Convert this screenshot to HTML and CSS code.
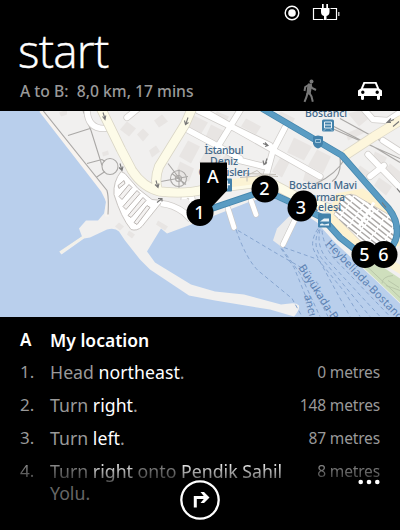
FILE: index.html
```html
<!DOCTYPE html>
<html lang="en">
<head>
<meta charset="utf-8">
<title>Directions</title>
<link rel="stylesheet" href="styles.css">
</head>
<body>
<main class="phone">
  <header class="header">
    <div class="status">
      <svg width="16" height="16" viewBox="0 0 16 16"><circle cx="8" cy="8" r="6.8" fill="none" stroke="#fff" stroke-width="1.4"/><circle cx="8" cy="8" r="3.8" fill="#fff"/></svg>
      <svg width="28" height="18" viewBox="0 0 28 18"><path d="M9 4.500H1.500v11h10M14.500 15.500h10v-11h-6" fill="none" stroke="#fff" stroke-width="1.200"/><path d="M26 8h1.500v4H26z" fill="#bbb"/><path d="M10 0h1.700v4h2.600V0H16v4h1.500v4c0 2.200-1.300 3.500-3 4v4h-2.500v-4c-1.800-.5-3-1.800-3-4V4h1z" fill="#fff"/></svg>
    </div>
    <h1>start</h1>
    <div class="summary">
      <p>A to B:&nbsp; 8,0 km, 17 mins</p>
      <div class="modes">
        <svg width="16" height="24" viewBox="0 0 16 24"><circle cx="9.500" cy="2.500" r="2" fill="#777"/><path d="M7.300 5.500L3.200 8 2.500 12M8 5.500l2 3.500 4 2M5.500 14l-1 4-2 4.800M7 13.500l2.500 4 1.300 5.300" fill="none" stroke="#777" stroke-width="2"/><path d="M6 4.500h4L9.500 10l-1 5.500h-4L5 9z" fill="#777"/></svg>
        <svg width="24" height="18" viewBox="0 0 24 18"><path fill="#fff" fill-rule="evenodd" d="M5.500 0h13l2.700 6.500L24 8.500V14h-2v2.500a1.500 1.500 0 0 1-3 0V14H6v2.500a1.500 1.500 0 0 1-3 0V14H0V8.500l2.800-2zM7 1.800L5 6.300h14l-2-4.500zM4.800 8.500a1.700 1.700 0 1 0 0 3.400 1.700 1.700 0 0 0 0-3.400zm14.400 0a1.700 1.700 0 1 0 0 3.400 1.700 1.700 0 0 0 0-3.400z"/></svg>
      </div>
    </div>
  </header>

  <svg class="map" viewBox="0 110.500 400 206" width="400" height="206">
    <defs>
      <clipPath id="lot"><path d="M342 197Q351 190 361 198L392 216Q397 228 392 247L369 249L334 214Z"/></clipPath>
    </defs>
    <rect y="110" width="400" height="207" fill="#b9cfec"/>
    <!-- land -->
    <path fill="#f1f0ef" d="M41 110L60 131 82 164 104 194 106 202 104 213 98 220H86L79 228 82 236 60 251.500 61.500 254 84 238 90 237 107 229Q115 227 119 231L125 240 140 259 150 269 189 295 215 300 270 309 294 316Q300 309 299 305 296 302 290 303L281 304 244 294 215 291 191 284 155 262 147 251 161 228 167 233 202 220 250 201 270 196 295 207 317 222 334 241 350 256 376 280 400 303V110Z"/>
    <path d="M60 252L84 236" stroke="#f3f1e9" stroke-width="2.500"/>
    <path d="M41 110L103 190 108 200 107 216" fill="none" stroke="#f7f3ef" stroke-width="4"/>
    <path d="M289 216L277 228 273 240 281 246 299 216Z" fill="#ebebeb"/>
    <path d="M358 262L367 256 400 278V302Z" fill="#cfdfbd"/>
    <path d="M368 267L400 297M382 283Q382 276 393 275M386 285L400 290M388 280L399 287" fill="none" stroke="#b9c7a9"/>
    <!-- building blocks -->
    <g fill="#e8e5e3">
      <path d="M120 129l7-8 9 7-7 8zM102 152l6-2 1 4-6 2zM59 112l8-3v5l-6 2zM137 134l6-6 6 6-6 7zM149 150l7-5 4 6-8 6zM154 120l8-6 6 7-9 6zM119 222l5 4-4 4-5-4zM129 230l6 4-3 4-5-4zM158 220l10 6-3 4-9-6z"/>
      <path d="M194 115l14 7-8 13-13-7zM211 124l18 9-9 16-16-9zM217 111l12 5-6 10-12-6zM246 118l15 8-5 8-15-8zM188 140l12 6-9 17-12-7zM207 148l14 7-8 14-14-7zM233 148l-1 17-10-7zM180 161l14 7-5 13-15-4zM294 137l18 9-8 14-17-8zM317 149l14 7-8 17-15-8zM281 156l9 5-8 16-10-6zM281 111l14 7-5 9-16-9zM306 169l18 8-4 10-17-7zM348 113l15-4 8 7-12 10zM346 133l14-6 5 5-17 8zM360 165l10 7-6 9-9-8zM379 177l13 9-6 9-12-10zM375 151l12 6-5 10-10-8zM390 163l10 8v10l-14-12z"/>
    </g>
    <!-- footpaths -->
    <g fill="none" stroke="#aaa8a6" stroke-width="1.100">
      <path d="M43 110L107 190Q109 197 108 214M68 135L90 128M83 110L91 130 102 165M87 163L102 159M96 177L105 171M102 159L105 161"/>
      <circle cx="110" cy="166" r="8"/>
      <circle cx="178.500" cy="178" r="8"/><circle cx="178.500" cy="178" r="3"/>
      <path d="M168 163L184 184M161 181L188 176M179 169V188M172 173L186 184M345 158Q336 174 316 183M340 157Q342 174 332 181M328 123L375 147 400 162M330 127L400 158M340 118L400 151"/>
    </g>
    <!-- minor streets: casing, then surface -->
    <g fill="none" stroke-linejoin="round" stroke-linecap="round">
      <path stroke="#cfccc9" stroke-width="7" d="M187 129L213 143 240 158M198 110L270 145M205 111L320 176M240 110L216 149M285 127L273 150 262 190M240 160L264 166M365 110L373 119 388 120 400 112M368 154L400 187M370 176L384 165M383 140L400 151M87 108Q87 128 104 128L111 127M127 117L138 108"/>
      <path stroke="#fff" stroke-width="5.500" d="M187 129L213 143 240 158M198 110L270 145M205 111L320 176M240 110L216 149M285 127L273 150 262 190M240 160L264 166M365 110L373 119 388 120 400 112M368 154L400 187M370 176L384 165M383 140L400 151M87 108Q87 128 104 128L111 127M127 117L138 108"/>
    </g>
    <!-- west parking lot -->
    <path d="M121 171Q113 181 114 194 121 217 131 229 137 231 142 226L163 200 152 199 138 188 125 173Z" fill="#fff" stroke="#c9c5c2"/>
    <g fill="#f4f2f1" stroke="#aaa3a0" stroke-width=".8">
      <path d="M118 185l6-5 1 3-6 5zM119 196l10-12 3 3-10 12zM123 206l14-16 3 3-14 16zM128 215l15-18 3 3-15 17zM134 222l13-17 3 2-13 17z"/>
    </g>
    <path d="M161 203Q173 204 184 212L191 219M184 199a4 4 0 1 1 6 3" fill="none" stroke="#d0cdca" stroke-width="7"/>
    <path d="M161 203Q173 204 184 212L191 219M184 199a4 4 0 1 1 6 3" fill="none" stroke="#fff" stroke-width="5.500"/>
    <!-- main roads -->
    <g fill="none" stroke-linejoin="round">
      <path d="M101 108L121 149 132 170Q143 187 160 191 185 194 204 189L268 181 300 198 330 208M192 108L185 124 159 166Q154 179 158 190" stroke="#d9d5c5" stroke-width="10"/>
      <path d="M101 108L121 149 132 170Q143 187 160 191 185 194 204 189L268 181 300 198 330 208M192 108L185 124 159 166Q154 179 158 190" stroke="#fdfbe8" stroke-width="8.500"/>
      <path d="M402 119L374 136 345 155" stroke="#ddd8c8" stroke-width="10"/>
      <path d="M402 119L374 136 345 155" stroke="#fdf6dc" stroke-width="8.500"/>
      <path d="M205 186L268 178M368 249L390 263 402 270" stroke="#fbf3d4" stroke-width="8"/>
      <path d="M245 173L276 174M240 177L264 175M247 181V175L257 170 263 175 278 176" stroke="#c5c0b8" stroke-width="1"/>
    </g>
    <path d="M336 193L363 188 395 210 400 245 365 256 327 219Z" fill="#fdf2cf"/>
    <path d="M342 197Q351 190 361 198L392 216Q397 228 392 247L369 249L334 214Z" fill="#fff" stroke="#d7cfc4"/>
    <g clip-path="url(#lot)" fill="none" stroke="#aaa7a5" stroke-width="1.400" stroke-dasharray="11 1.500">
      <path d="M349 187L405 231M344 189L404 236M342 194L400 240M339 197L398 244M337 201L396 248M334 204L390 249M332 208L382 248M329 211L373 247"/>
    </g>
    <path d="M374 202L359 226" stroke="#fff" stroke-width="3"/>
    <!-- piers -->
    <g stroke-linecap="round" fill="none">
      <path d="M228 208L234 227M251 200L256 214M296 217L283 244" stroke="#cbc8c5" stroke-width="6"/>
      <path d="M228 208L234 227M251 200L256 214M296 217L283 244" stroke="#fff" stroke-width="4.800"/>
    </g>
    <!-- ferry lines -->
    <g fill="none" stroke="#86a5d0" stroke-width="1" stroke-dasharray="4 3">
      <path d="M236 229Q246 258 258 270L292 298 302 316M238 230L275 252 303 268 328 316M281 248L294 267 314 316M282 248L300 273 320 316M284 247L318 259 345 292 360 316M318 228Q309 242 315 252L350 316M319 229Q312 244 321 257L370 316M320 229Q316 246 328 260L380 316M322 230Q324 250 340 264L390 316"/>
    </g>
    <g class="sea-label">
      <text transform="translate(325 244) rotate(46)" textLength="108">Heybeliada-Bostancı</text>
      <text transform="translate(298 267) rotate(57)" textLength="80">Büyükada-Bost</text>
      <text transform="translate(304 295) rotate(76)" textLength="22">ancı</text>
    </g>
    <!-- route -->
    <path d="M262 108L342 155 383 202Q397 215 397 230 398 243 384 254M200 212L265 190 302 207 322 217 340 237 364 256" fill="none" stroke="#4587ae" stroke-width="6.600"/>
    <path d="M262 108L342 155 383 202Q397 215 397 230 398 243 384 254M200 212L265 190 302 207 322 217 340 237 364 256" fill="none" stroke="#5a9cc3" stroke-width="5"/>
    <!-- one-way arrows -->
    <path fill="none" stroke="#777" stroke-width="1.100" d="M103 112l2 6M102.500 116l2.500 3 .8-4M120 163l2 7M119 167l3 3 1-4M188 117l-2 6M184.500 120l1 4 3-2M156 180l2 7M155 184l3 3 1-4M157 202l5-4M158 198h4v3M263 143l5 2M265 142l3 3-3 1M267 158l-2 6M263 160l1 4 3-2M387 122l7-3M391 118l-4 4h4M393 126l6-5M382 202l4 5M397 188l3 4"/>
    <!-- map places -->
    <g fill="#4382ab">
      <rect x="322" y="119" width="12" height="12" rx="1.500"/>
      <path d="M313 136l5-1 5 1v7q-1 4-5 5-4-1-5-5z"/>
      <rect x="219" y="178" width="13" height="13" rx="1"/>
      <rect x="318" y="213" width="13" height="14" rx="1"/>
    </g>
    <path d="M324.500 121.500h7v6h-7zM324.500 124.500h7M325 129l-1 1M331 129l1 1" fill="none" stroke="#e8f2f8"/>
    <path d="M315.500 139h5v3h-5z" fill="none" stroke="#9cc3da"/>
    <path d="M320 221l4-3h5v3zM320 224q2-2 4 0l5-1v2h-9z" fill="#e8f2f8"/>
    <path d="M227 180v8M225 184h5" stroke="#fff" stroke-width="1.500"/>
    <g class="place-label">
      <text x="224" y="153" textLength="39">İstanbul</text>
      <text x="224" y="164.500" textLength="28">Deniz</text>
      <text x="224" y="175.500" textLength="51">Otobüsleri</text>
      <text x="326" y="116.500" textLength="42">Bostancı</text>
      <text x="323" y="188.500" textLength="68">Bostancı Mavi</text>
      <text x="323" y="200" textLength="44">Marmara</text>
      <text x="322" y="210.500" textLength="38">İskelesi</text>
    </g>
    <!-- route markers -->
    <g>
      <path d="M200 162H227V190L212 206 200 212Z"/>
      <circle cx="200" cy="212" r="13.500"/><circle cx="265" cy="188.500" r="13.500"/>
      <circle cx="303.500" cy="203.500" r="13.500"/><circle cx="301" cy="207.500" r="13.500"/>
      <circle cx="365" cy="254" r="13.500"/><circle cx="384" cy="254" r="13.500"/>
    </g>
    <g class="marker-label">
      <text x="213" y="182.500">A</text><text x="199.500" y="218">1</text><text x="264.500" y="194.500">2</text><text x="301" y="213.500">3</text><text x="364.500" y="260.500">5</text><text x="383.500" y="260.500">6</text>
    </g>
  </svg>

  <ol class="steps">
    <li class="origin"><span>A</span><span>My location</span></li>
    <li><span>1.</span><span>Head <b>northeast</b>.</span><span class="dist">0 metres</span></li>
    <li><span>2.</span><span>Turn <b>right</b>.</span><span class="dist">148 metres</span></li>
    <li><span>3.</span><span>Turn <b>left</b>.</span><span class="dist">87 metres</span></li>
    <li class="fade"><span>4.</span><span>Turn <b>right</b> onto <b>Pendik Sahil</b></span><span class="dist">8 metres</span></li>
    <li class="wrapped"><span></span><span>Yolu.</span></li>
  </ol>

  <svg class="next" width="40" height="40" viewBox="0 0 40 40"><circle cx="20" cy="20" r="18.700" fill="#000" stroke="#fff" stroke-width="2.300"/><path d="M15.300 27.500V17.500H26" fill="none" stroke="#fff" stroke-width="3"/><path d="M20.500 12H24l5.500 5.500L24 23h-3.500l4.500-5.500z" fill="#fff"/></svg>
  <svg class="more" width="22" height="6" viewBox="0 0 22 6" fill="#fff"><circle cx="2.700" cy="3" r="2.300"/><circle cx="11" cy="3" r="2.300"/><circle cx="19.300" cy="3" r="2.300"/></svg>
</main>
</body>
</html>
```
FILE: styles.css
```css
* { box-sizing: border-box; }
body { margin: 0; background: #000; }
.phone {
  position: relative;
  width: 400px;
  height: 530px;
  overflow: hidden;
  display: flex;
  flex-direction: column;
  background: #000;
  color: #999;
  font-family: "Noto Sans", "Open Sans", sans-serif;
}
svg { display: block; flex: none; }
.header { height: 110.5px; flex: none; padding: 3px 18px 0 19px; }
.status { display: flex; justify-content: flex-end; align-items: center; gap: 12px; height: 20px; padding-right: 42px; }
h1 {
  margin: 0;
  height: 54px;
  color: #fff;
  font: 300 46px/54px "Open Sans", sans-serif;
  letter-spacing: -0.8px;
  -webkit-text-stroke: 0.4px #fff;
  transform: translateX(-1px);
}
.summary { display: flex; justify-content: space-between; align-items: center; height: 28px; }
.summary p { margin: 0; padding-left: 1px; font-size: 15.7px; font-weight: 500; white-space: pre; }
.modes { display: flex; align-items: center; gap: 40px; }
.place-label text { fill: #41688a; font: 500 10.5px "Noto Sans", sans-serif; text-anchor: middle; }
.sea-label text { fill: #5c82b3; font: 11px "Noto Sans", sans-serif; }
.marker-label text { fill: #fff; font: 500 18px "Noto Sans", sans-serif; text-anchor: middle; }
.steps { list-style: none; margin: 0; padding: 8px 20px 0; }
.steps li {
  display: grid;
  grid-template-columns: 30px 1fr auto;
  align-items: center;
  height: 33px;
  font-size: 17.7px;
  letter-spacing: 0.02px;
  line-height: 24px;
  white-space: nowrap;
}
.steps li > span:first-child { font-size: 17px; }
.steps b { color: #fff; font-weight: 400; }
.steps .dist { font-size: 15.5px; letter-spacing: -0.15px; }
.steps .origin { color: #fff; font-weight: 600; font-size: 17.5px; letter-spacing: 0; height: 31px; }
.steps .fade { -webkit-mask-image: linear-gradient(#000 20%, rgba(0,0,0,.3) 85%); mask-image: linear-gradient(#000 20%, rgba(0,0,0,.3) 85%); }
.steps .wrapped { height: 10px; line-height: 10px; color: #666; }
.next { position: absolute; left: 180px; top: 480px; }
.more { position: absolute; left: 358px; top: 479px; }
```
